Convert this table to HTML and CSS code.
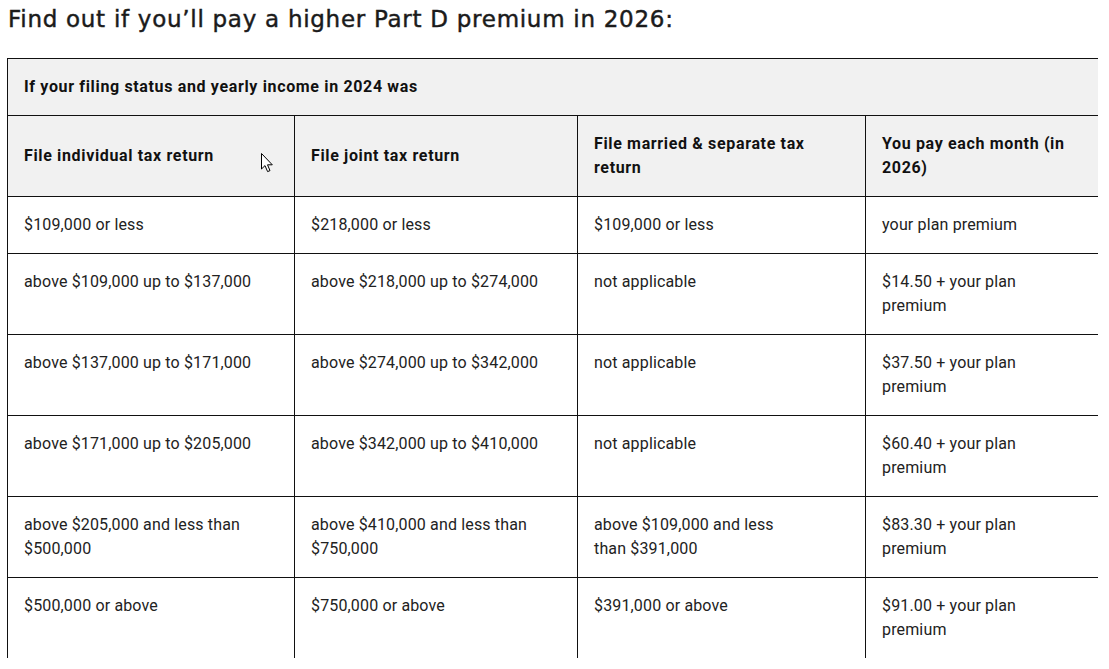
FILE: index.html
```html
<!DOCTYPE html>
<html lang="en">
<head>
<meta charset="utf-8">
<title>Part D premium</title>
<link rel="stylesheet" href="styles.css">
</head>
<body>
<main class="page">
  <h1 class="title">Find out if you’ll pay a higher Part D premium in 2026:</h1>
  <div class="table-wrap">
    <table class="irmaa">
      <colgroup>
        <col class="c1"><col class="c2"><col class="c3"><col class="c4">
      </colgroup>
      <thead>
        <tr><th colspan="4" class="top">If your filing status and yearly income in 2024 was</th></tr>
        <tr>
          <th class="hcell">File individual tax return</th>
          <th class="hcell">File joint tax return</th>
          <th class="hcell sep">File married &amp; separate tax return</th>
          <th class="hcell last">You pay each month (in 2026)</th>
        </tr>
      </thead>
      <tbody>
        <tr><td>$109,000 or less</td><td>$218,000 or less</td><td class="sep">$109,000 or less</td><td class="last">your plan premium</td></tr>
        <tr><td>above $109,000 up to $137,000</td><td>above $218,000 up to $274,000</td><td class="sep">not applicable</td><td class="last">$14.50 + your plan premium</td></tr>
        <tr><td>above $137,000 up to $171,000</td><td>above $274,000 up to $342,000</td><td class="sep">not applicable</td><td class="last">$37.50 + your plan premium</td></tr>
        <tr><td>above $171,000 up to $205,000</td><td>above $342,000 up to $410,000</td><td class="sep">not applicable</td><td class="last">$60.40 + your plan premium</td></tr>
        <tr><td>above $205,000 and less than $500,000</td><td>above $410,000 and less than $750,000</td><td class="sep">above $109,000 and less than $391,000</td><td class="last">$83.30 + your plan premium</td></tr>
        <tr><td>$500,000 or above</td><td>$750,000 or above</td><td class="sep">$391,000 or above</td><td class="last">$91.00 + your plan premium</td></tr>
      </tbody>
    </table>
  </div>
  <svg class="cursor" width="13" height="20" viewBox="0 0 13 20" aria-hidden="true">
    <path d="M0.5 0.5 L0.5 16 L4 12.6 L6.6 18.6 L9 17.6 L6.5 11.8 L11.3 11.8 Z" fill="#fff" stroke="#000" stroke-width="1" stroke-linejoin="miter"/>
  </svg>
</main>
</body>
</html>
```
FILE: styles.css
```css
html, body {
  margin: 0;
  padding: 0;
  background: #ffffff;
}

.page {
  position: relative;
  padding: 5px 0 0 7px;
  font-family: Roboto, "Liberation Sans", sans-serif;
  color: #222222;
}

.title {
  margin: 0 0 25px 1px;
  font-family: "DejaVu Sans", "Open Sans", sans-serif;
  font-size: 23px;
  line-height: 28px;
  font-weight: 400;
  color: #1b1b1b;
  letter-spacing: 0.72px;
  -webkit-text-stroke: 0.45px #1b1b1b;
}

.table-wrap {
  width: 1091px;
  height: 600px;
  overflow: hidden;
}

.irmaa {
  border-collapse: collapse;
  table-layout: fixed;
  width: 1120px;
  font-size: 16px;
  line-height: 24px;
  letter-spacing: 0.15px;
}

.c1 { width: 287px; }
.c2 { width: 283px; }
.c3 { width: 288px; }
.c4 { width: 262px; }

.irmaa th,
.irmaa td {
  border: 1px solid #111111;
  padding: 16px 16px;
  text-align: left;
  vertical-align: top;
}

.irmaa th.sep,
.irmaa td.sep {
  padding-right: 60px;
}

.irmaa th.last,
.irmaa td.last {
  padding-right: 54px;
}

.irmaa th {
  background: #f1f1f1;
  font-weight: 700;
  color: #111111;
  letter-spacing: 0.65px;
}

.irmaa th.top,
.irmaa th.hcell {
  vertical-align: middle;
}

.cursor {
  position: absolute;
  left: 261px;
  top: 153px;
}
```
